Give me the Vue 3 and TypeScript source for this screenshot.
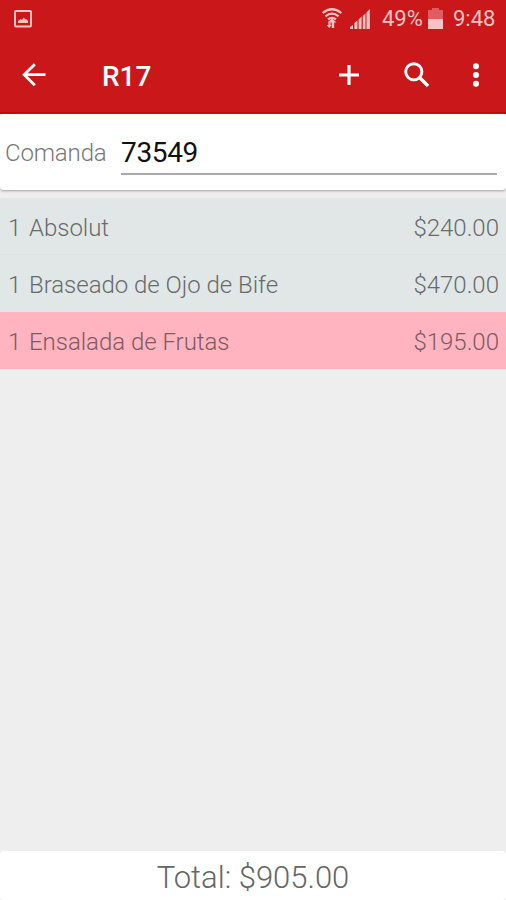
<script setup lang="ts">
interface OrderItem {
  quantity: number
  name: string
  price: number
  highlighted?: boolean
}

const items: OrderItem[] = [
  { quantity: 1, name: 'Absolut', price: 240 },
  { quantity: 1, name: 'Braseado de Ojo de Bife', price: 470 },
  { quantity: 1, name: 'Ensalada de Frutas', price: 195, highlighted: true },
]
const total = items.reduce((sum, item) => sum + item.quantity * item.price, 0)
const money = (value: number): string => `$${value.toFixed(2)}`
</script>

<template>
  <main class="screen">
    <header class="header">
      <div class="status">
        <svg class="picture" width="18" height="18" viewBox="0 0 18 18">
          <rect x="1" y="1" width="16" height="15.5" rx="1" fill="none" stroke="currentColor" stroke-width="2" />
          <path d="M4 13V11L6.5 9L8 10L9.5 7.5L11.5 9.5L12.5 9L14 11V13Z" fill="currentColor" />
        </svg>
        <span class="spacer"></span>
        <svg class="wifi" width="20" height="21" viewBox="0 0 20 21">
          <path d="M.7 5Q10-2.5 19.3 5M3.4 8.3Q10 3 16.6 8.3M6 11.4Q10 8.2 14 11.4" fill="none" stroke="currentColor" stroke-width="2.2" />
          <path d="M10 10.5L14.5 14.5H12.2V20H9.8V14.5H8.6V17H9.8L7.2 20L4.6 17H6.4V13.5Z" fill="currentColor" />
        </svg>
        <svg class="signal" width="20" height="20" viewBox="0 0 20 20" fill="currentColor">
          <path d="M0 20V18L3 16V20ZM4.4 20V14L7.4 11.5V20ZM8.6 20V10.5L11.6 7.5V20ZM12.8 20V7L15.5 4.5V20ZM16.5 20V3.5L19.8 0V20Z" />
        </svg>
        <span class="percent">49%</span>
        <svg class="battery" width="15" height="22" viewBox="0 0 15 22">
          <path d="M0 2H4V0H11V2H15V12H0Z" fill="#df5d60" />
          <path d="M0 11H15V21H0Z" fill="#f9c3c4" />
        </svg>
        <span class="time">9:48</span>
      </div>
      <div class="toolbar">
        <button class="back" aria-label="Volver">
          <svg width="24" height="24" viewBox="0 0 24 24" fill="none" stroke="currentColor" stroke-width="2.8">
            <path d="M23.5 11.7H2M12.8 1.2L2.2 11.7L12.8 22.2" />
          </svg>
        </button>
        <h1>R17</h1>
        <button class="add" aria-label="Agregar">
          <svg width="20" height="20" viewBox="0 0 20 20" fill="none" stroke="currentColor" stroke-width="3.2">
            <path d="M0 10H20M10 0V20" />
          </svg>
        </button>
        <button class="search" aria-label="Buscar">
          <svg width="26" height="26" viewBox="0 0 26 26" fill="none" stroke="currentColor">
            <circle cx="9.8" cy="9.8" r="8.1" stroke-width="2.9" />
            <path d="M15.5 15.5L24 24" stroke-width="3.4" />
          </svg>
        </button>
        <button class="more" aria-label="Más opciones">
          <svg width="6" height="24" viewBox="0 0 6 24" fill="currentColor">
            <circle cx="3" cy="3.2" r="3" /><circle cx="3" cy="12" r="3" /><circle cx="3" cy="20.7" r="3" />
          </svg>
        </button>
      </div>
    </header>
    <section class="ticket">
      <label for="ticket-number">Comanda</label>
      <input id="ticket-number" type="text" value="73549" />
    </section>
    <ul class="items">
      <li v-for="item in items" :key="item.name" :class="{ highlighted: item.highlighted }">
        <span class="quantity">{{ item.quantity }}</span>
        <span class="name">{{ item.name }}</span>
        <span class="price">{{ money(item.price) }}</span>
      </li>
    </ul>
    <footer class="total"><span>Total: {{ money(total) }}</span></footer>
  </main>
</template>

<style>
body { margin: 0; background: #eee; }
</style>

<style scoped>
* { box-sizing: border-box; }
.screen {
  display: flex;
  flex-direction: column;
  height: 900px;
  overflow: hidden;
  background: #eee;
  font-family: Roboto, sans-serif;
}
.header {
  flex: 0 0 114px;
  background: #ca171a;
  border-bottom: 2px solid #c50609;
  color: #fff;
}
.status {
  display: flex;
  align-items: center;
  height: 38px;
  padding: 0 11px 0 14px;
  color: #f9c3c4;
  font-size: 22px;
  line-height: 38px;
}
.picture { margin-top: -1px; }
.spacer { flex: 1; }
.wifi { margin: -1px 8px 0 0; }
.signal { margin: -1px 12px 0 0; }
.percent { width: 42px; margin-right: 4px; }
.battery { margin: -1px 10px 0 0; }
.time { width: 42px; }
.toolbar {
  display: flex;
  align-items: center;
  height: 74px;
  padding: 0 27px 0 22px;
}
button {
  display: flex;
  padding: 0;
  border: 0;
  background: none;
  color: #fff;
}
h1 {
  flex: 1;
  margin: 3px 0 0 56px;
  font-size: 28px;
  font-weight: 500;
  line-height: 34px;
}
.search { margin-left: 45px; }
.more { margin-left: 43px; }
.ticket {
  flex: 0 0 77px;
  display: flex;
  align-items: flex-start;
  padding: 14px 9px 0 5px;
  background: #fff;
  border-bottom: 1px solid #b9bdbd;
  border-radius: 4px;
  box-shadow: 0 1px 2px #ccc;
}
label {
  width: 116px;
  font-size: 24px;
  font-weight: 300;
  letter-spacing: -.15px;
  line-height: 50px;
  color: #777;
}
input {
  flex: 1;
  min-width: 0;
  height: 47px;
  padding: 4px 0 0;
  border: 0;
  border-bottom: 2px solid #aaa;
  outline: 0;
  background: none;
  font: 400 28px Roboto, sans-serif;
  letter-spacing: -.35px;
  color: #111;
}
.items { margin: 7px 0 0; padding: 0; list-style: none; }
li {
  display: flex;
  align-items: center;
  height: 57px;
  padding: 3px 7px 0 8px;
  background: #e1e7e7;
  border-bottom: 1px solid #dce1e2;
  font-size: 24px;
  font-weight: 300;
  color: #686b6c;
}
li:nth-child(2) { border-color: #e1e7e7; }
li.highlighted { background: #ffb4c0; border-color: #ffb4c0; color: #805a60; }
.quantity { width: 21px; }
.name { flex: 1; letter-spacing: -.03px; }
.total {
  display: flex;
  justify-content: center;
  height: 49px;
  margin-top: auto;
  background: #fff;
  border-radius: 4px;
  font-size: 31px;
  font-weight: 300;
  line-height: 53px;
  color: #666;
}
</style>
